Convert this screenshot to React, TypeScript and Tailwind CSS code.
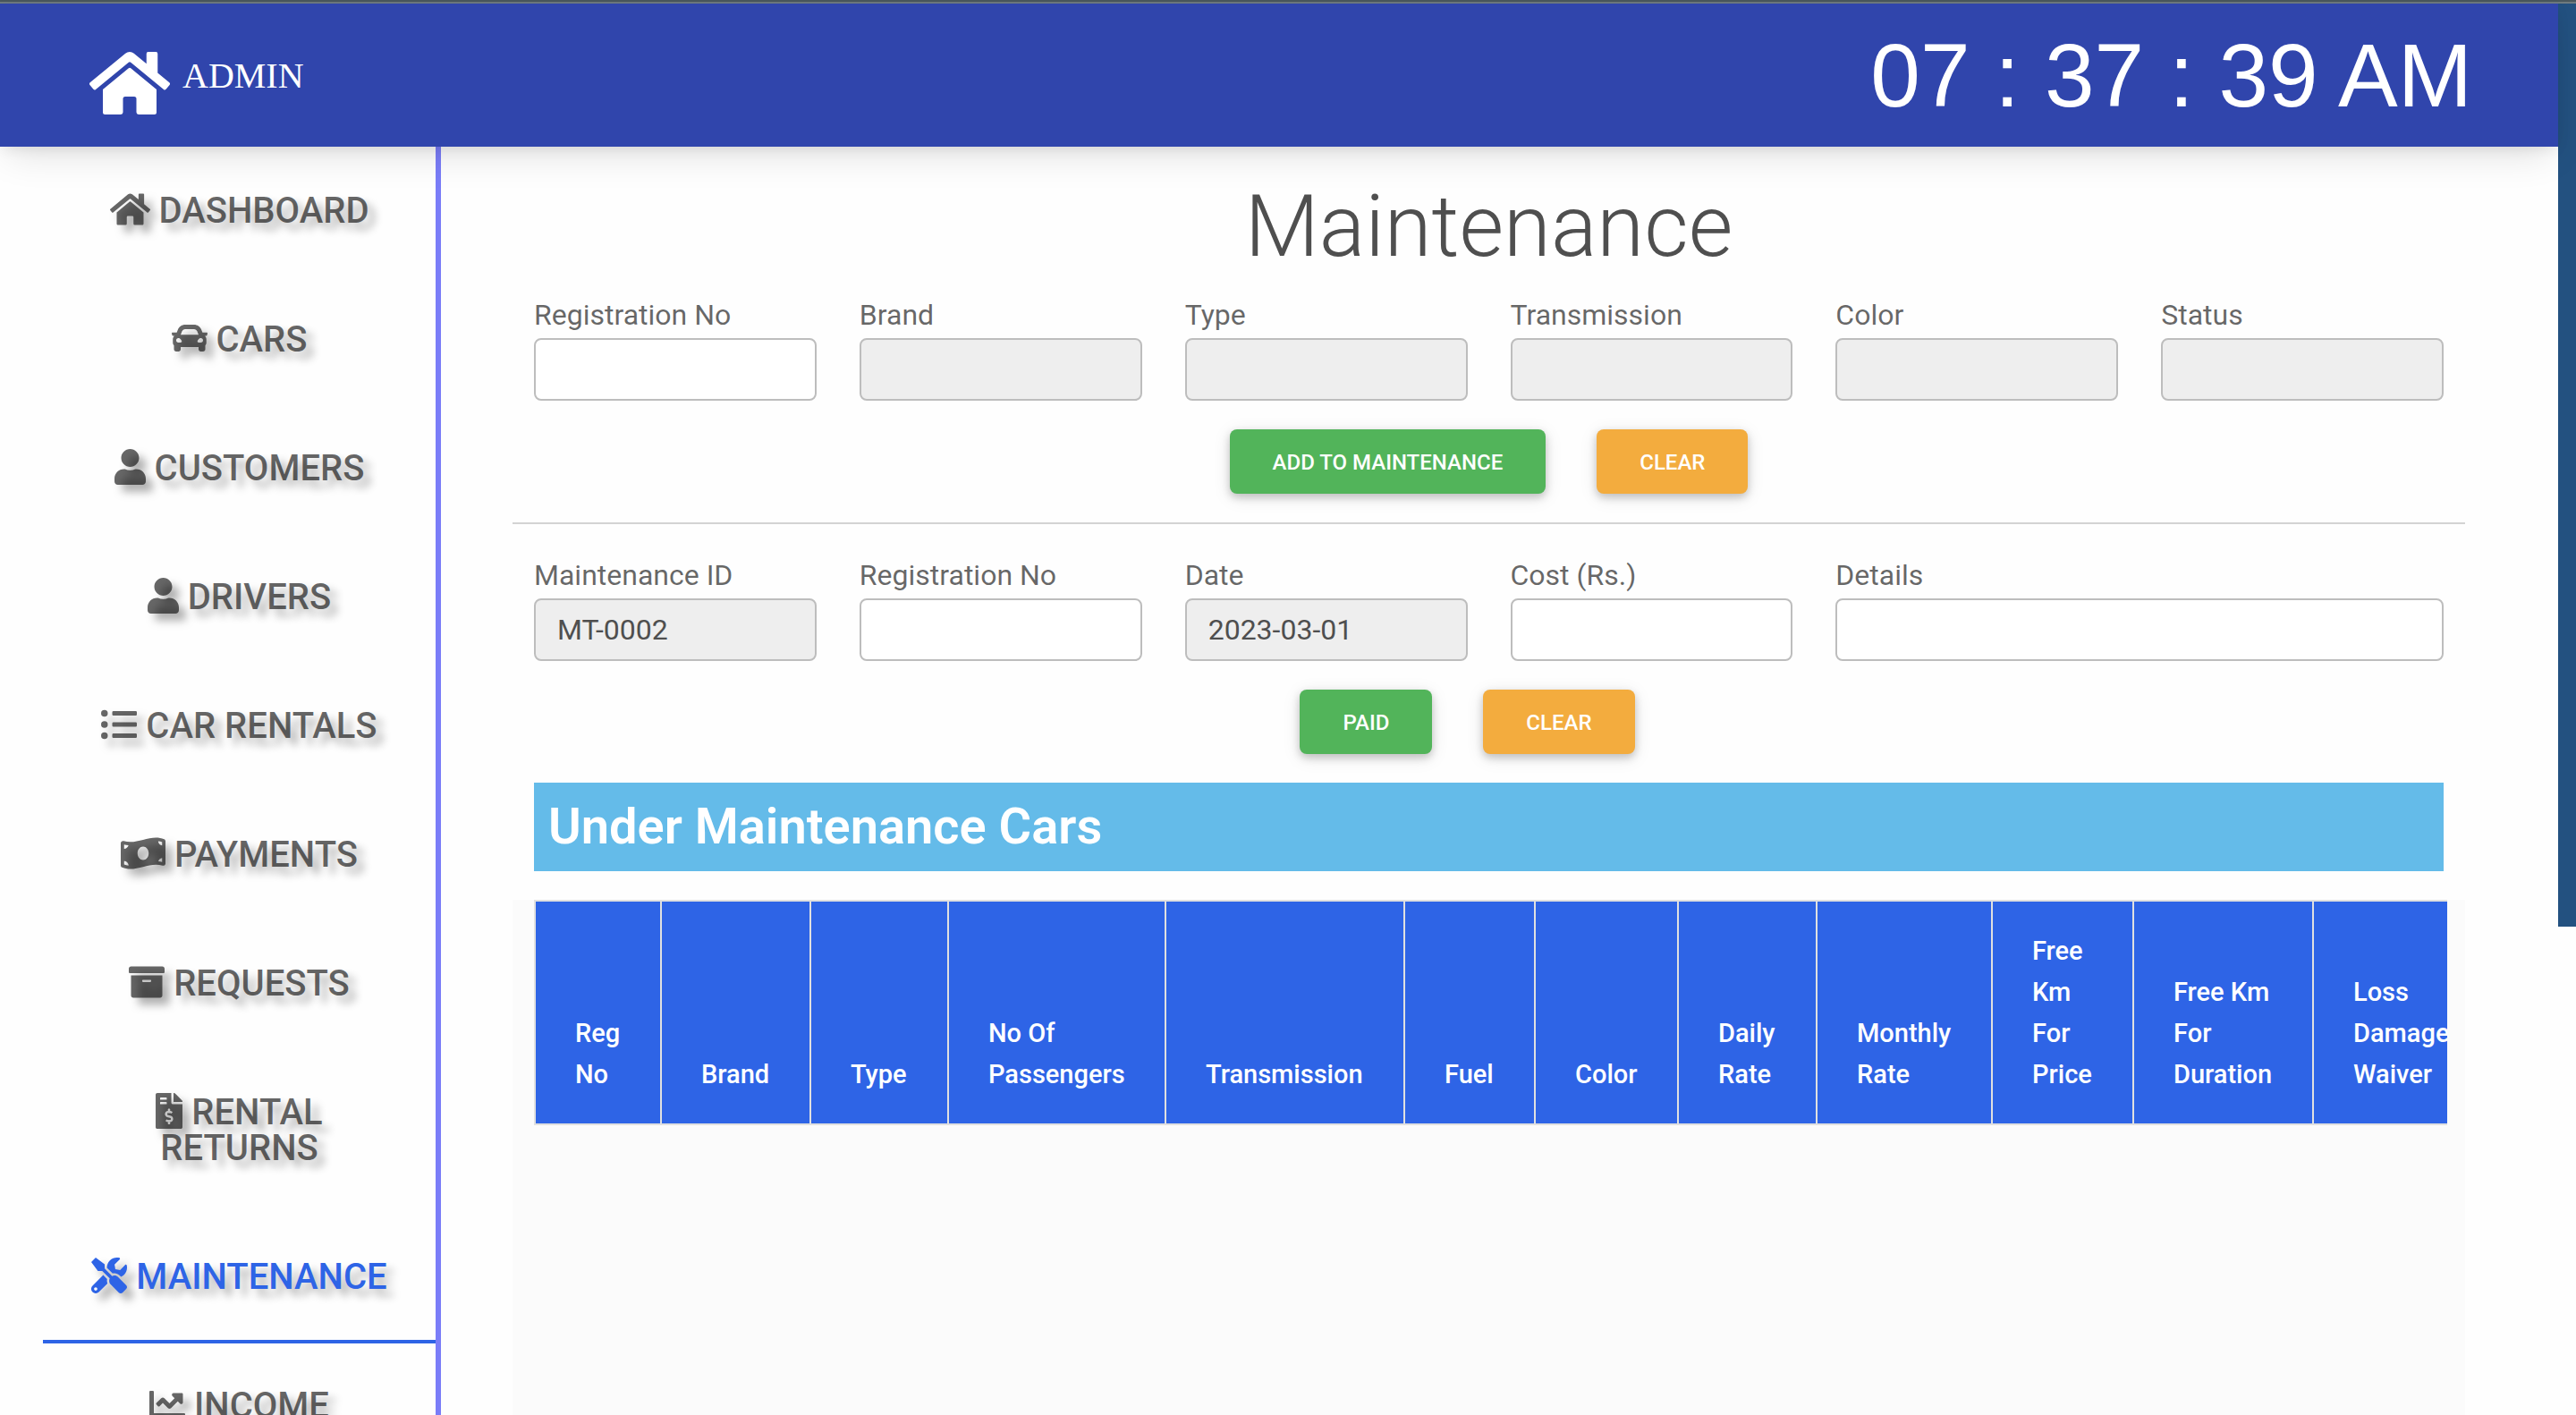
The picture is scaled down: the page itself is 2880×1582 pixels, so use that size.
import { useId } from "react";
import type { IconType } from "react-icons";
import {
  FaArchive,
  FaCar,
  FaChartLine,
  FaFileInvoiceDollar,
  FaHome,
  FaListUl,
  FaMoneyBillWave,
  FaTools,
  FaUser,
} from "react-icons/fa";

type NavItem = { label: string; icon: IconType; iconWidth: string; active?: boolean };

const navItems: NavItem[] = [
  { label: "DASHBOARD", icon: FaHome, iconWidth: "w-[45px]" },
  { label: "CARS", icon: FaCar, iconWidth: "w-[40px]" },
  { label: "CUSTOMERS", icon: FaUser, iconWidth: "w-[35px]" },
  { label: "DRIVERS", icon: FaUser, iconWidth: "w-[35px]" },
  { label: "CAR RENTALS", icon: FaListUl, iconWidth: "w-[40px]" },
  { label: "PAYMENTS", icon: FaMoneyBillWave, iconWidth: "w-[50px]" },
  { label: "REQUESTS", icon: FaArchive, iconWidth: "w-[40px]" },
  { label: "RENTAL RETURNS", icon: FaFileInvoiceDollar, iconWidth: "w-[30px]" },
  { label: "MAINTENANCE", icon: FaTools, iconWidth: "w-[40px]", active: true },
  { label: "INCOME", icon: FaChartLine, iconWidth: "w-[40px]" },
];

const columns = [
  { title: "Reg No", width: "w-[141px]" },
  { title: "Brand", width: "w-[167px]" },
  { title: "Type", width: "w-[154px]" },
  { title: "No Of Passengers", width: "w-[243px]" },
  { title: "Transmission", width: "w-[267px]" },
  { title: "Fuel", width: "w-[146px]" },
  { title: "Color", width: "w-[160px]" },
  { title: "Daily Rate", width: "w-[155px]" },
  { title: "Monthly Rate", width: "w-[196px]" },
  { title: "Free Km For Price", width: "w-[158px]" },
  { title: "Free Km For Duration", width: "w-[201px]" },
  { title: "Loss Damage Waiver", width: "w-[201px]" },
];

function Header() {
  return (
    <header className="relative z-10 flex items-center justify-between bg-[#3045ac] py-[30px] pr-24 pl-[100px] text-white shadow-[0_16px_40px_-8px_rgba(0,0,0,0.12),0_4px_16px_-4px_rgba(0,0,0,0.12)]">
      <a href="#" className="flex items-start gap-[14px] pt-[18px]">
        <FaHome className="h-[80px] w-[90px]" />
        <span className="pt-3 font-['Liberation_Serif',serif] text-[40px] leading-[40px]">ADMIN</span>
      </a>
      <time className="font-['Liberation_Sans',sans-serif] text-[100px] leading-[100px]">
        07 : 37 : 39 AM
      </time>
    </header>
  );
}

function Sidebar() {
  return (
    <nav className="w-[493px] shrink-0 border-r-[6px] border-[#7a7df8] pt-[2px] pl-12">
      <ul>
        {navItems.map(({ label, icon: Icon, iconWidth, active }) => (
          <li key={label}>
            <a
              href="#"
              className={`block border-b-4 px-12 pt-12 pb-[50px] text-center text-[40px] leading-[40px] font-medium [text-shadow:8px_8px_10px_rgba(0,0,0,0.3)] ${
                active ? "border-[#2e64e6] text-[#2e64e6]" : "border-transparent text-black/60"
              }`}
            >
              <Icon
                className={`inline-block h-[40px] align-[-5px] ${iconWidth} ${
                  active
                    ? "[filter:drop-shadow(8px_8px_5px_rgba(0,0,0,0.3))]"
                    : "[filter:drop-shadow(8px_8px_5px_rgba(0,0,0,0.5))]"
                }`}
              />{" "}
              {label}
            </a>
          </li>
        ))}
      </ul>
    </nav>
  );
}

function Field({
  label,
  value = "",
  disabled = false,
  wide = false,
}: {
  label: string;
  value?: string;
  disabled?: boolean;
  wide?: boolean;
}) {
  const id = useId();
  return (
    <div className={wide ? "col-span-2" : ""}>
      <label htmlFor={id} className="block text-[32px] leading-[51px] text-black/60">
        {label}
      </label>
      <input
        id={id}
        type="text"
        defaultValue={value}
        disabled={disabled}
        className="block h-[70px] w-full rounded-lg border-2 border-[#bdbdbd] bg-white px-6 text-[32px] leading-[51px] text-[#4f4f4f] disabled:bg-[#eeeeee]"
      />
    </div>
  );
}

function ActionButton({ label, tone }: { label: string; tone: "green" | "orange" }) {
  return (
    <button
      type="button"
      className={`h-[72px] rounded-lg px-12 pt-0.5 text-[24px] leading-[36px] font-medium text-white shadow-[0_4px_10px_rgba(0,0,0,0.2),0_4px_20px_rgba(0,0,0,0.1)] ${
        tone === "green" ? "bg-[#52b45a]" : "bg-[#f3ac3e]"
      }`}
    >
      {label}
    </button>
  );
}

function CarsTable() {
  return (
    <div className="grow bg-[#fbfbfb] pr-5 pl-6">
      <div className="overflow-hidden">
        <table className="w-[2189px] table-fixed border-collapse text-left text-white">
          <thead>
            <tr className="bg-[#2e64e6]">
              {columns.map(({ title, width }) => (
                <th
                  key={title}
                  scope="col"
                  className={`border-2 border-[#e0e0e0] px-[44px] py-8 align-bottom text-[29px] leading-[46px] font-medium ${width}`}
                >
                  {title}
                </th>
              ))}
            </tr>
          </thead>
        </table>
      </div>
    </div>
  );
}

export default function App() {
  return (
    <div className="flex h-screen flex-col overflow-hidden bg-[#fefefe] font-['Roboto',sans-serif]">
      <div className="h-1 shrink-0 border-b-2 border-[#6f7b7f] bg-[#4a585d]" />
      <div className="flex min-h-0 grow">
        <div className="flex min-w-0 grow flex-col">
          <Header />
          <div className="flex min-h-0 grow">
            <Sidebar />
            <main className="flex min-w-0 grow flex-col pt-8 pr-[104px] pl-20">
              <h1 className="mb-4 text-center text-[96px] leading-[115px] font-light text-[#4f4f4f]">
                Maintenance
              </h1>

              <form className="border-b-2 border-[#d3d3d3] pb-8">
                <div className="grid grid-cols-6 gap-12 px-6">
                  <Field label="Registration No" />
                  <Field label="Brand" disabled />
                  <Field label="Type" disabled />
                  <Field label="Transmission" disabled />
                  <Field label="Color" disabled />
                  <Field label="Status" disabled />
                </div>
                <div className="mt-8 flex justify-center gap-[57px]">
                  <ActionButton label="ADD TO MAINTENANCE" tone="green" />
                  <ActionButton label="CLEAR" tone="orange" />
                </div>
              </form>

              <form className="py-8">
                <div className="grid grid-cols-6 gap-12 px-6">
                  <Field label="Maintenance ID" value="MT-0002" disabled />
                  <Field label="Registration No" />
                  <Field label="Date" value="2023-03-01" disabled />
                  <Field label="Cost (Rs.)" />
                  <Field label="Details" wide />
                </div>
                <div className="mt-8 flex justify-center gap-[57px] pr-12">
                  <ActionButton label="PAID" tone="green" />
                  <ActionButton label="CLEAR" tone="orange" />
                </div>
              </form>

              <h2 className="mx-6 mb-8 bg-[#64bbe9] p-4 text-[56px] leading-[67px] font-semibold text-white">
                Under Maintenance Cars
              </h2>

              <CarsTable />
            </main>
          </div>
        </div>
        <div className="w-5 shrink-0">
          <div className="h-[1032px] bg-[#235180]" />
        </div>
      </div>
    </div>
  );
}
